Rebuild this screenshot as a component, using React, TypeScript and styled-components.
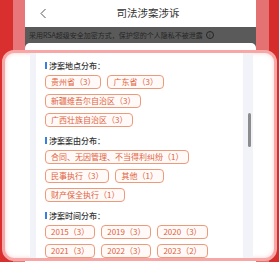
import React from 'react'
import styled, { createGlobalStyle } from 'styled-components'

const GlobalStyle = createGlobalStyle`
  html, body {
    margin: 0;
    padding: 0;
  }
  body {
    font-family: "Noto Sans CJK SC", "Noto Sans", sans-serif;
  }
`;

const Screen = styled.div`
  position: relative;
  width: 279px;
  height: 262px;
  overflow: hidden;
  display: flex;
`;
const Strip = styled.div<{ $w: number; $color: string }>`
  width: ${p => p.$w}px;
  flex-shrink: 0;
  background: ${p => p.$color};
`;
const Phone = styled.div`
  flex: 1;
  display: flex;
  flex-direction: column;
  background: #5a5a5a;
`;
const NavBar = styled.div`
  height: 27px;
  flex-shrink: 0;
  background: #fff;
  display: grid;
  grid-template-columns: 1fr auto 1fr;
  align-items: center;
  padding-left: 15px;
`;
const Title = styled.div`
  font-size: 10.5px;
  color: #333;
  line-height: 1;
  padding-bottom: 1px;
`;
const Notice = styled.div`
  height: 16px;
  flex-shrink: 0;
  display: flex;
  align-items: center;
  gap: 3px;
  padding-left: 4px;
  font-size: 7px;
  color: #262626;
  white-space: nowrap;
`;
const InfoIcon = styled.span`
  width: 6px;
  height: 6px;
  border: 0.8px solid #262626;
  border-radius: 50%;
  font-size: 5px;
  line-height: 6px;
  text-align: center;
`;
const Card = styled.div`
  flex: 1;
  background: #fff;
  border-radius: 5px 5px 0 0;
`;

const Modal = styled.div`
  position: absolute;
  top: 50px;
  left: 2px;
  width: 275px;
  height: 211px;
  box-sizing: border-box;
  border: 3px solid #f8a7a7;
  border-radius: 12px;
  background: #fff;
  box-shadow: inset 0 0 4px rgba(248, 150, 150, 0.45);
  padding: 0 21px 0 25px;
  display: flex;
`;
const Panel = styled.div`
  flex: 1;
  display: flex;
  background: #f2f3f8;
  padding-left: 6px;
`;
const Content = styled.div`
  flex: 1;
  background: #fff;
  padding: 7px 0 0 9px;
  overflow: hidden;
`;
const Track = styled.div`
  width: 10px;
  box-sizing: border-box;
  padding: 60px 0 0 5px;
`;
const Thumb = styled.div`
  width: 3px;
  height: 34px;
  border-radius: 2px;
  background: #8c8c8c;
`;

const Section = styled.div`
  margin-bottom: 8px;
`;
const SectionTitle = styled.div`
  display: flex;
  align-items: center;
  gap: 2px;
  height: 10px;
  font-size: 8px;
  font-weight: 500;
  color: #333;
  &::before {
    content: '';
    width: 2px;
    height: 7px;
    background: #3a7fe0;
  }
`;
const Tags = styled.div`
  display: flex;
  flex-wrap: wrap;
  gap: 5px 6px;
  margin-top: 5px;
  max-width: 170px;
`;
const Tag = styled.span`
  height: 14px;
  box-sizing: border-box;
  border: 1px solid #ec9a7a;
  border-radius: 4px;
  padding: 0 5px;
  font-size: 8px;
  line-height: 12px;
  color: #e2613b;
  background: #fffaf8;
  white-space: nowrap;
`;

const sections = [
  {
    title: '涉案地点分布：',
    tags: ['贵州省（3）', '广东省（3）', '新疆维吾尔自治区（3）', '广西壮族自治区（3）'],
  },
  {
    title: '涉案案由分布：',
    tags: ['合同、无因管理、不当得利纠纷（1）', '民事执行（3）', '其他（1）', '财产保全执行（1）'],
  },
  {
    title: '涉案时间分布：',
    tags: ['2015（3）', '2019（3）', '2020（3）', '2021（3）', '2022（3）', '2023（2）'],
  },
];

const App = () => {
  return (
    <Screen>
      <GlobalStyle />
      <Strip $w={13} $color="#d9302f" />
      <Strip $w={12} $color="#e7777a" />
      <Phone>
        <NavBar>
          <svg width="7" height="11" viewBox="0 0 7 11">
            <polyline points="5.5,1 1,5.5 5.5,10" fill="none" stroke="#555" strokeWidth="1" />
          </svg>
          <Title>司法涉案涉诉</Title>
          <span />
        </NavBar>
        <Notice>
          采用RSA超级安全加密方式，保护您的个人隐私不被泄露
          <InfoIcon>i</InfoIcon>
        </Notice>
        <Card />
      </Phone>
      <Strip $w={13} $color="#e57272" />
      <Strip $w={10} $color="#d62d2c" />
      <Modal>
        <Panel>
          <Content>
            {sections.map(s => (
              <Section key={s.title}>
                <SectionTitle>{s.title}</SectionTitle>
                <Tags>
                  {s.tags.map(t => <Tag key={t}>{t}</Tag>)}
                </Tags>
              </Section>
            ))}
          </Content>
          <Track>
            <Thumb />
          </Track>
        </Panel>
      </Modal>
    </Screen>
  )
}

export default App
